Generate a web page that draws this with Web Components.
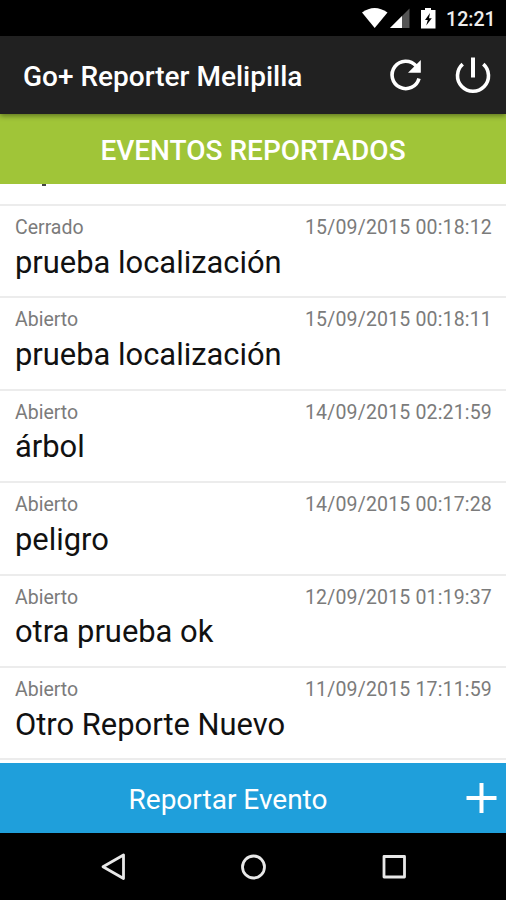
<!DOCTYPE html>
<html lang="es">
<head>
<meta charset="utf-8">
<title>Go+ Reporter Melipilla</title>
<style>
  body {
    margin: 0;
    font-family: Roboto, "Liberation Sans", sans-serif;
  }
</style>
</head>
<body>
<reporter-app></reporter-app>

<script>
const make = (html) => {
  const template = document.createElement("template");
  template.innerHTML = html;
  return template;
};

const define = (name, template, setup) => {
  window.customElements.define(name, class extends HTMLElement {
    constructor() {
      super();
      this.attachShadow({ mode: "open" });
      this.shadowRoot.appendChild(template.content.cloneNode(true));
    }
    connectedCallback() {
      if (setup) setup(this, this.shadowRoot);
    }
  });
};

define("status-bar", make(`
  <style>
    :host {
      display: flex;
      align-items: flex-start;
      justify-content: flex-end;
      height: 36px;
      background: #000;
      color: #fff;
    }
    svg { display: block; flex: none; }
    time {
      width: 60px;
      margin-left: 9px;
      font-size: 19.6px;
      line-height: 23px;
      font-weight: 500;
      margin-top: 8px;
      color: #eee;
    }
  </style>
  <svg width="76" height="36" viewBox="0 0 76 36">
    <path d="M1 12.500Q13.500 3.500 26.500 12.500L13.700 28Z" fill="#fff"/>
    <path d="M48.500 8.500V28H29Z" fill="#555"/>
    <path d="M41 16V28H29Z" fill="#fff"/>
    <path d="M64 8h6v2H74.500v18.500H60V10h4Z" fill="#fff"/>
    <path d="M69 13l-5 7h2.800l-1.600 5.500 5.600-7.300H68Z" fill="#000"/>
  </svg>
  <time>12:21</time>
`));

define("app-bar", make(`
  <style>
    :host {
      display: flex;
      align-items: center;
      height: 78px;
      padding-left: 23px;
      background: #212121;
      color: #fff;
      box-shadow: 0 2px 5px rgba(0, 0, 0, .4);
      position: relative; /* shadow falls over the heading below */
    }
    h1 {
      flex: 1;
      margin: 4px 0 0;
      font-size: 28px;
      line-height: 34px;
      font-weight: 500;
      white-space: nowrap;
    }
    svg { flex: none; display: block; }
  </style>
  <h1><slot></slot></h1>
  <svg width="126" height="78" viewBox="0 0 126 78" fill="none" stroke="#fff" stroke-width="3.600">
    <path d="M39 42.500A13.700 13.700 0 1 1 36 29.800"/>
    <path d="M40.800 24v12.800H28Z" fill="#fff" stroke="none"/>
    <path d="M82.700 28.200A15.500 15.500 0 1 0 103.300 28.200"/>
    <path d="M93 21.500v20" stroke-width="4"/>
  </svg>
`));

define("list-heading", make(`
  <style>
    :host {
      display: flex;
      align-items: center;
      justify-content: center;
      height: 70px;
      background: #a0c538;
      color: #fff;
    }
    h2 {
      margin: 4px 0 0;
      font-size: 28px;
      line-height: 34px;
      font-weight: 500;
    }
  </style>
  <h2><slot></slot></h2>
`));

define("event-item", make(`
  <style>
    :host {
      display: block;
      box-sizing: border-box;
      height: 92.400px;
      padding: 10px 14px 0 15px;
      border-bottom: 2px solid #ececec;
    }
    .meta {
      display: flex;
      justify-content: space-between;
      color: #7b7b7b;
      font-size: 19.500px;
      line-height: 24px;
    }
    .date { letter-spacing: .17px; }
    .title {
      color: #111;
      font-size: 30.900px;
      line-height: 40px;
      margin-top: 2.600px;
      white-space: nowrap;
    }
  </style>
  <div class="meta"><span class="state"></span><span class="date"></span></div>
  <div class="title"><slot></slot></div>
`), (host, root) => {
  root.querySelector(".state").textContent = host.getAttribute("state");
  root.querySelector(".date").textContent = host.getAttribute("date");
});

// Bottom edge of the row that is scrolled under the heading
define("scrolled-item", make(`
  <style>
    :host {
      display: block;
      box-sizing: border-box;
      height: 22px;
      border-bottom: 2px solid #ececec;
    }
    i {
      display: block;
      width: 4px;
      height: 2px;
      margin-left: 42px;
      background: #444;
    }
  </style>
  <i></i>
`));

define("report-button", make(`
  <style>
    :host {
      display: flex;
      align-items: center;
      box-sizing: border-box;
      height: 70px;
      background: #1f9fdb;
      color: #fff;
    }
    span {
      flex: 1;
      text-align: center;
      font-size: 28px;
      line-height: 34px;
      margin-top: 3px;
    }
    svg { flex: none; display: block; }
  </style>
  <span><slot></slot></span>
  <svg width="50" height="70" viewBox="0 0 50 70" stroke="#fff" stroke-width="4">
    <path d="M10.500 35h30M25.500 20v30"/>
  </svg>
`));

define("nav-bar", make(`
  <style>
    :host {
      display: flex;
      justify-content: center;
      height: 67px;
      background: #000;
    }
    svg { display: block; }
  </style>
  <svg width="506" height="67" viewBox="0 0 506 67" fill="none" stroke="#e8e8e8" stroke-width="2.800" stroke-linejoin="round">
    <path d="M123.500 22v23.500L103 33.800Z"/>
    <circle cx="253.500" cy="34" r="11"/>
    <rect x="384" y="23.500" width="20.500" height="20.500"/>
  </svg>
`));

define("reporter-app", make(`
  <style>
    :host {
      display: flex;
      flex-direction: column;
      width: 506px;
      height: 900px;
      overflow: hidden;
      background: #fff;
    }
    main {
      flex: 1;
      min-height: 0;
      overflow: hidden;
    }
    status-bar, app-bar, list-heading, report-button, nav-bar { flex: none; }
  </style>
  <status-bar></status-bar>
  <app-bar>Go+ Reporter Melipilla</app-bar>
  <list-heading>EVENTOS REPORTADOS</list-heading>
  <main>
    <scrolled-item></scrolled-item>
    <event-item state="Cerrado" date="15/09/2015 00:18:12">prueba localización</event-item>
    <event-item state="Abierto" date="15/09/2015 00:18:11">prueba localización</event-item>
    <event-item state="Abierto" date="14/09/2015 02:21:59">árbol</event-item>
    <event-item state="Abierto" date="14/09/2015 00:17:28">peligro</event-item>
    <event-item state="Abierto" date="12/09/2015 01:19:37">otra prueba ok</event-item>
    <event-item state="Abierto" date="11/09/2015 17:11:59">Otro Reporte Nuevo</event-item>
  </main>
  <report-button>Reportar Evento</report-button>
  <nav-bar></nav-bar>
`));
</script>
</body>
</html>
